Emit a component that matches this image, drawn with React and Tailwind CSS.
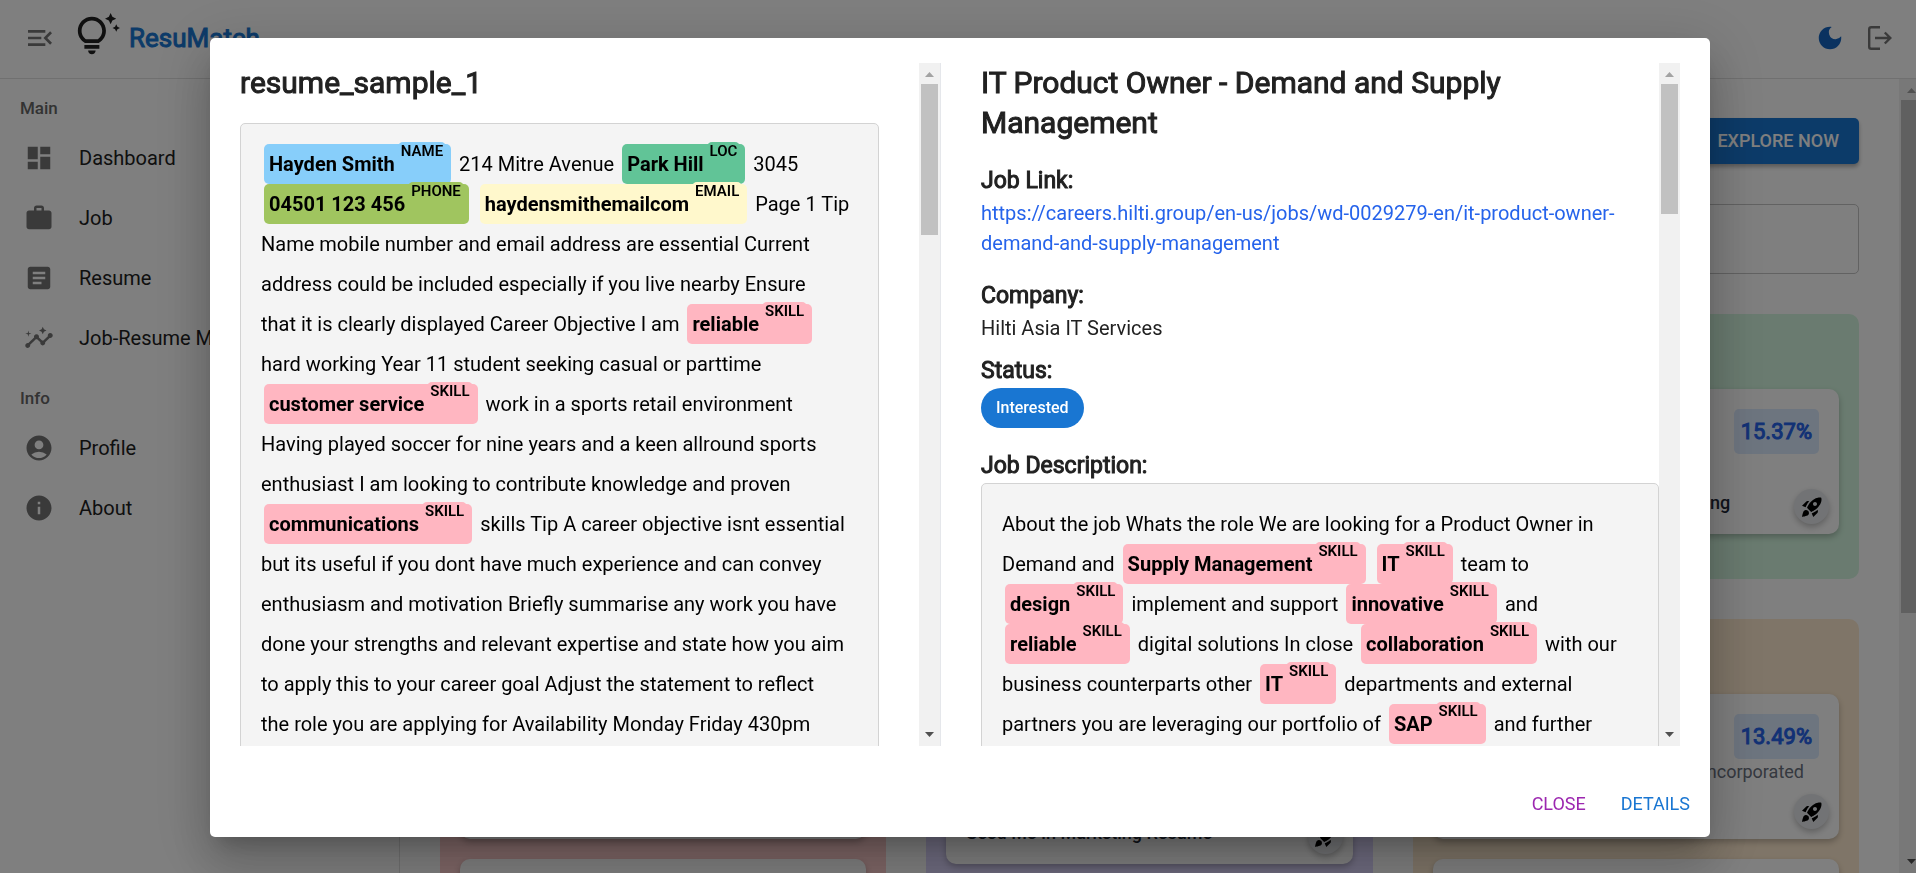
import React from "react";
import {
  MdMenuOpen,
  MdDashboard,
  MdWork,
  MdArticle,
  MdInsights,
  MdAccountCircle,
  MdInfo,
  MdDarkMode,
  MdOutlineTipsAndUpdates,
  MdRocketLaunch,
} from "react-icons/md";

const ENTITY_COLORS = {
  NAME: "bg-[#87cefa]",
  LOC: "bg-[#61c497]",
  PHONE: "bg-[#a0c55f]",
  EMAIL: "bg-[#fff8cc]",
  SKILL: "bg-[#ffb6c1]",
};

const RESUME_TEXT = [
  ["Hayden Smith", "NAME"],
  " 214 Mitre Avenue ",
  ["Park Hill", "LOC"],
  " 3045\n",
  ["04501 123 456", "PHONE"],
  " ",
  ["haydensmithemailcom", "EMAIL"],
  " Page 1 Tip\nName mobile number and email address are essential Current address could be included especially if you live nearby Ensure\nthat it is clearly displayed Career Objective I am ",
  ["reliable", "SKILL"],
  "\nhard working Year 11 student seeking casual or parttime\n",
  ["customer service", "SKILL"],
  " work in a sports retail environment\nHaving played soccer for nine years and a keen allround sports\nenthusiast I am looking to contribute knowledge and proven\n",
  ["communications", "SKILL"],
  " skills Tip A career objective isnt essential but its useful if you dont have much experience and can convey enthusiasm and motivation Briefly summarise any work you have done your strengths and relevant expertise and state how you aim to apply this to your career goal Adjust the statement to reflect\nthe role you are applying for Availability Monday Friday 430pm",
];

const JOB_TEXT = [
  "About the job Whats the role We are looking for a Product Owner in Demand and ",
  ["Supply Management", "SKILL"],
  " ",
  ["IT", "SKILL"],
  " team to\n",
  ["design", "SKILL"],
  " implement and support ",
  ["innovative", "SKILL"],
  " and\n",
  ["reliable", "SKILL"],
  " digital solutions In close ",
  ["collaboration", "SKILL"],
  " with our business counterparts other ",
  ["IT", "SKILL"],
  " departments and external partners you are leveraging our portfolio of ",
  ["SAP", "SKILL"],
  " and further",
];

function AnnotatedText({ parts }) {
  return (
    <div className="rounded-[5px] border border-[#d3d3d3] bg-[#f4f4f4] p-5 pb-40 text-[20px] leading-10 whitespace-pre-line text-black">
      {parts.map((part, i) =>
        typeof part === "string" ? (
          <span key={i}>{part}</span>
        ) : (
          <mark
            key={i}
            className={`mx-[3px] inline-flex h-10 items-start rounded-[5px] px-[5px] align-top font-bold text-black ${ENTITY_COLORS[part[1]]}`}
          >
            {part[0]}
            <sup className="top-0 -mt-[2px] ml-[3px] rounded-[5px] bg-inherit px-[3px] text-[15px] leading-[18px] font-semibold">
              {part[1]}
            </sup>
          </mark>
        ),
      )}
    </div>
  );
}

function Scrollbar({ thumb, className = "" }) {
  return (
    <div aria-hidden="true" className={`flex shrink-0 flex-col items-center bg-[#f1f1f1] ${className}`}>
      <svg width="21" height="21" viewBox="0 0 21 21" className="shrink-0">
        <path d="M6 14h9l-4.5-5z" fill="#a3a3a3" />
      </svg>
      <div className={`w-[17px] bg-[#c1c1c1] ${thumb}`} />
      <div className="flex-1" />
      <svg width="21" height="21" viewBox="0 0 21 21" className="shrink-0">
        <path d="M6 7h9l-4.5 5z" fill="#505050" />
      </svg>
    </div>
  );
}

function NavItem({ icon: Icon, label }) {
  return (
    <li>
      <a href="#" className="flex h-[60px] items-center gap-[25px] pl-6 text-[20px] whitespace-nowrap text-[#212121]">
        <Icon size={30} className="shrink-0 text-[#757575]" />
        {label}
      </a>
    </li>
  );
}

function NavGroup({ title, children }) {
  return (
    <section>
      <h2 className="flex h-10 items-center pt-[2px] pl-5 text-[17px] font-medium text-[#666666]">{title}</h2>
      <ul>{children}</ul>
    </section>
  );
}

function MatchCard({ score, company, resume, tall }) {
  return (
    <article
      className={`flex flex-col justify-between rounded-[10px] bg-white p-5 shadow-[0_3px_6px_rgba(0,0,0,0.25)] ${tall ? "h-[170px]" : "h-[145px]"}`}
    >
      {score && (
        <>
          <div className="relative flex items-start justify-end">
            <span className="rounded-[5px] bg-[#dbeafe] px-[7px] text-[22px] leading-[45px] text-[#2563eb] [-webkit-text-stroke:1px]">
              {score}
            </span>
            <span className="absolute top-[45px] right-[15px] text-[18px] leading-[25px] text-[#6b7280]">{company}</span>
          </div>
          <div className="-mr-[10px] -mb-[10px] flex items-center justify-between">
            <span className="pb-2 text-[18px] font-medium whitespace-nowrap text-[#1f2937]">{resume}</span>
            <button
              type="button"
              aria-label="Launch"
              className="flex size-[35px] shrink-0 items-center justify-center rounded-full bg-[#e5e7eb] text-black shadow-[0_3px_6px_rgba(0,0,0,0.25)]"
            >
              <MdRocketLaunch size={24} />
            </button>
          </div>
        </>
      )}
    </article>
  );
}

function MatchGroup({ color, children }) {
  return (
    <section className={`flex min-h-[265px] flex-col gap-5 rounded-[10px] px-5 pt-[75px] pb-[45px] ${color}`}>
      {children}
    </section>
  );
}

function Page() {
  return (
    <div className="flex h-full flex-col bg-white">
      <header className="flex h-[79px] shrink-0 items-center border-b border-[#e0e0e0] pr-[21px] pb-[2px] pl-6">
        <button type="button" aria-label="Collapse menu" className="text-[#757575]">
          <MdMenuOpen size={32} />
        </button>
        <a href="#" className="ml-[19px] flex items-center gap-[9px]">
          <MdOutlineTipsAndUpdates size={45} className="mb-[6px] text-[#212121]" />
          <span className="text-[26px] text-[#1976d2] [-webkit-text-stroke:1px]">ResuMatch</span>
        </a>
        <div className="ml-auto flex items-center gap-5">
          <button type="button" aria-label="Dark mode" className="text-[#1565c0]">
            <MdDarkMode size={30} />
          </button>
          <button type="button" aria-label="Log out" className="text-[#757575]">
            <svg width="30" height="30" viewBox="0 0 30 30" fill="none" stroke="currentColor" strokeWidth="2.400">
              <path d="M15 4.200H6.200Q4.200 4.200 4.200 6.200V23.800Q4.200 25.800 6.200 25.800H15M10 15H25.200M19.800 9.500L25.300 15L19.800 20.500" />
            </svg>
          </button>
        </div>
      </header>
      <div className="flex min-h-0 flex-1">
        <nav className="w-[400px] shrink-0 border-r border-[#e0e0e0] pt-[9px]">
          <NavGroup title="Main">
            <NavItem icon={MdDashboard} label="Dashboard" />
            <NavItem icon={MdWork} label="Job" />
            <NavItem icon={MdArticle} label="Resume" />
            <NavItem icon={MdInsights} label="Job-Resume Match" />
          </NavGroup>
          <div className="pt-[10px]">
            <NavGroup title="Info">
              <NavItem icon={MdAccountCircle} label="Profile" />
              <NavItem icon={MdInfo} label="About" />
            </NavGroup>
          </div>
        </nav>
        <main className="flex min-w-0 flex-1 flex-col gap-10 overflow-hidden px-10 pt-[39px]">
          <div className="flex shrink-0 justify-end">
            <button
              type="button"
              className="h-[46px] rounded-[5px] bg-[#1976d2] px-5 pb-[2px] text-[18px] font-medium text-white shadow-[0_3px_4px_rgba(0,0,0,0.3)]"
            >
              EXPLORE NOW
            </button>
          </div>
          <div className="h-[70px] shrink-0 rounded-[5px] border border-[#c4c4c4]" />
          <div className="grid grid-cols-3 gap-10">
            <MatchGroup color="bg-[#fecdcd]">
              <MatchCard score="18.20%" />
            </MatchGroup>
            <MatchGroup color="bg-[#ddd6fe]">
              <MatchCard score="16.84%" />
            </MatchGroup>
            <MatchGroup color="bg-[#d4f7e0]">
              <MatchCard score="15.37%" resume="Seed Me In Commercial Marketing" />
            </MatchGroup>
            <MatchGroup color="bg-[#fecdcd]">
              <MatchCard score="14.31%" />
              <MatchCard />
            </MatchGroup>
            <MatchGroup color="bg-[#ddd6fe]">
              <MatchCard score="13.90%" resume="Seed Me In Marketing Resume" tall />
              <MatchCard />
            </MatchGroup>
            <MatchGroup color="bg-[#ffebd0]">
              <MatchCard score="13.49%" company="Incorporated" />
              <MatchCard />
            </MatchGroup>
          </div>
        </main>
        <Scrollbar className="w-[17px] items-start pl-[2px]" thumb="h-[513px]" />
      </div>
    </div>
  );
}

function FieldTitle({ children }) {
  return <h3 className="text-[23px] leading-[35px] [-webkit-text-stroke:1px]">{children}</h3>;
}

function DialogTitle({ children }) {
  return <h2 className="mb-5 text-[30px] leading-10 [-webkit-text-stroke:1px]">{children}</h2>;
}

function MatchDialog() {
  return (
    <div
      role="dialog"
      aria-modal="true"
      className="flex h-[calc(100%-72px)] w-full max-w-[1500px] flex-col rounded-[5px] bg-white text-[#212121] shadow-[0_14px_19px_-9px_rgba(0,0,0,0.2),0_30px_48px_4px_rgba(0,0,0,0.14),0_11px_58px_10px_rgba(0,0,0,0.12)]"
    >
      <div className="grid min-h-0 flex-1 grid-cols-[35fr_37fr] px-[30px] py-[25px]">
        <section className="flex min-h-0">
          <div className="min-w-0 flex-1 overflow-hidden pr-10">
            <DialogTitle>resume_sample_1</DialogTitle>
            <AnnotatedText parts={RESUME_TEXT} />
          </div>
          <Scrollbar className="w-[21px]" thumb="h-[151px]" />
        </section>
        <section className="flex min-h-0 border-l border-[#e5e7eb]">
          <div className="min-w-0 flex-1 overflow-hidden pl-10 text-[20px] leading-[30px]">
            <DialogTitle>IT Product Owner - Demand and Supply Management</DialogTitle>
            <div className="mb-5">
              <FieldTitle>Job Link:</FieldTitle>
              <a href="#" className="text-[#2563eb]">
                https://careers.hilti.group/en-us/jobs/wd-0029279-en/it-product-owner-demand-and-supply-management
              </a>
            </div>
            <div className="mb-[10px]">
              <FieldTitle>Company:</FieldTitle>
              <p>Hilti Asia IT Services</p>
            </div>
            <div className="mb-5">
              <FieldTitle>Status:</FieldTitle>
              <span className="flex h-10 w-fit items-center rounded-full bg-[#1976d2] px-[15px] text-[16px] font-medium text-white">
                Interested
              </span>
            </div>
            <FieldTitle>Job Description:</FieldTitle>
            <AnnotatedText parts={JOB_TEXT} />
          </div>
          <Scrollbar className="w-[21px]" thumb="h-[130px]" />
        </section>
      </div>
      <div className="flex justify-end gap-3 px-[10px] pt-[9px] pb-[11px] text-[18px]">
        <button type="button" className="h-[46px] min-w-20 rounded-[5px] px-[10px] text-[#9c27b0]">
          CLOSE
        </button>
        <button type="button" className="h-[46px] min-w-20 rounded-[5px] px-[10px] text-[#1976d2]">
          DETAILS
        </button>
      </div>
    </div>
  );
}

export default function App() {
  return (
    <div className="h-screen overflow-hidden font-[Roboto,sans-serif]">
      <Page />
      <div className="fixed inset-0 flex items-center justify-center bg-black/50 pt-[2px] pl-1">
        <MatchDialog />
      </div>
    </div>
  );
}
